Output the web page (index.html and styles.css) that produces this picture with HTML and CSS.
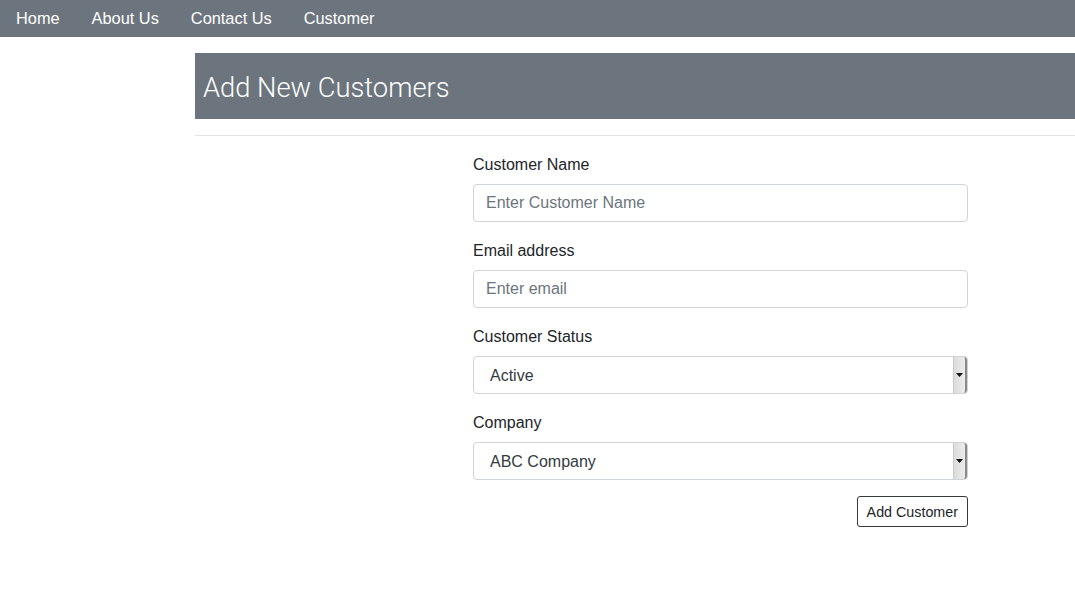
FILE: index.html
```html
<!DOCTYPE html>
<html>
<head>
<meta charset="utf-8">
<link rel="stylesheet" href="styles.css">
</head>
<body>
<nav class="navbar">
  <a class="nav-link" href="#">Home</a>
  <a class="nav-link" href="#">About Us</a>
  <a class="nav-link" href="#">Contact Us</a>
  <a class="nav-link" href="#">Customer</a>
</nav>
<main class="main">
  <h1 class="page-title">Add New Customers</h1>
  <hr class="divider">
  <div class="form-row">
    <form class="form">
      <div class="form-group">
        <label class="form-label">Customer Name</label>
        <input class="form-control" type="text" placeholder="Enter Customer Name">
      </div>
      <div class="form-group">
        <label class="form-label">Email address</label>
        <input class="form-control" type="email" placeholder="Enter email">
      </div>
      <div class="form-group">
        <label class="form-label">Customer Status</label>
        <div class="select-wrap">
          <select class="form-select"><option>Active</option><option>Inactive</option></select>
          <span class="select-arrow"><svg width="7" height="4" viewBox="0 0 7 4"><path d="M0 0H7L3.5 4Z" fill="#111"/></svg></span>
        </div>
      </div>
      <div class="form-group">
        <label class="form-label">Company</label>
        <div class="select-wrap">
          <select class="form-select"><option>ABC Company</option></select>
          <span class="select-arrow"><svg width="7" height="4" viewBox="0 0 7 4"><path d="M0 0H7L3.5 4Z" fill="#111"/></svg></span>
        </div>
      </div>
      <div class="actions">
        <button class="btn" type="button">Add Customer</button>
      </div>
    </form>
  </div>
</main>
</body>
</html>
```

FILE: styles.css
```css
* { box-sizing: border-box; }
body {
  margin: 0;
  font-family: "Liberation Sans", Arial, sans-serif;
  font-size: 16px;
  line-height: 1.5;
  color: #212529;
  background: #fff;
}
.navbar {
  display: flex;
  height: 37px;
  align-items: center;
  background: #6c757d;
}
.nav-link {
  color: #fff;
  text-decoration: none;
  padding: 0 16px;
  font-size: 16.35px;
}
.main {
  margin-left: 195px;
  padding-top: 16px;
}
.page-title {
  margin: 0;
  height: 66px;
  display: flex;
  align-items: center;
  padding: 5px 0 0 8px;
  background: #6c757d;
  color: #fff;
  font-family: Roboto, "Liberation Sans", sans-serif;
  font-weight: 300;
  font-size: 27.3px;
}
.divider {
  margin: 16px 0 16px;
  border: 0;
  border-top: 1px solid #e5e5e5;
}
.form-row {
  display: flex;
  padding-left: 278px;
}
.form {
  width: 495px;
}
.form-group {
  margin-bottom: 16px;
}
.form-label {
  display: block;
  margin-bottom: 8px;
  height: 24px;
  padding-top: 1px;
  line-height: 24px;
}
.form-control,
.form-select {
  display: block;
  width: 100%;
  height: 38px;
  padding: 6px 12px;
  font-family: inherit;
  font-size: 16px;
  color: #495057;
  background: #fff;
  border: 1px solid #ced4da;
  border-radius: 4px;
  outline: none;
}
.form-control::placeholder { color: #6c757d; }
.select-wrap { position: relative; }
.form-select {
  appearance: none;
  -webkit-appearance: none;
  padding-left: 16px;
  color: #343a40;
}
.select-arrow {
  position: absolute;
  right: 1px;
  top: 1px;
  bottom: 1px;
  width: 14px;
  background: linear-gradient(to right, #dcdcdc, #ececec);
  border-left: 1px solid #c8c8c8;
  border-right: 2px solid #8a8a8a;
  border-radius: 0 3px 3px 0;
  display: flex;
  align-items: center;
  justify-content: center;
  pointer-events: none;
}
.actions {
  display: flex;
  justify-content: flex-end;
}
.btn {
  height: 31px;
  padding: 0 9px;
  font-family: inherit;
  font-size: 14.3px;
  color: #212529;
  background: #fff;
  border: 1px solid #343a40;
  border-radius: 3px;
}
```
